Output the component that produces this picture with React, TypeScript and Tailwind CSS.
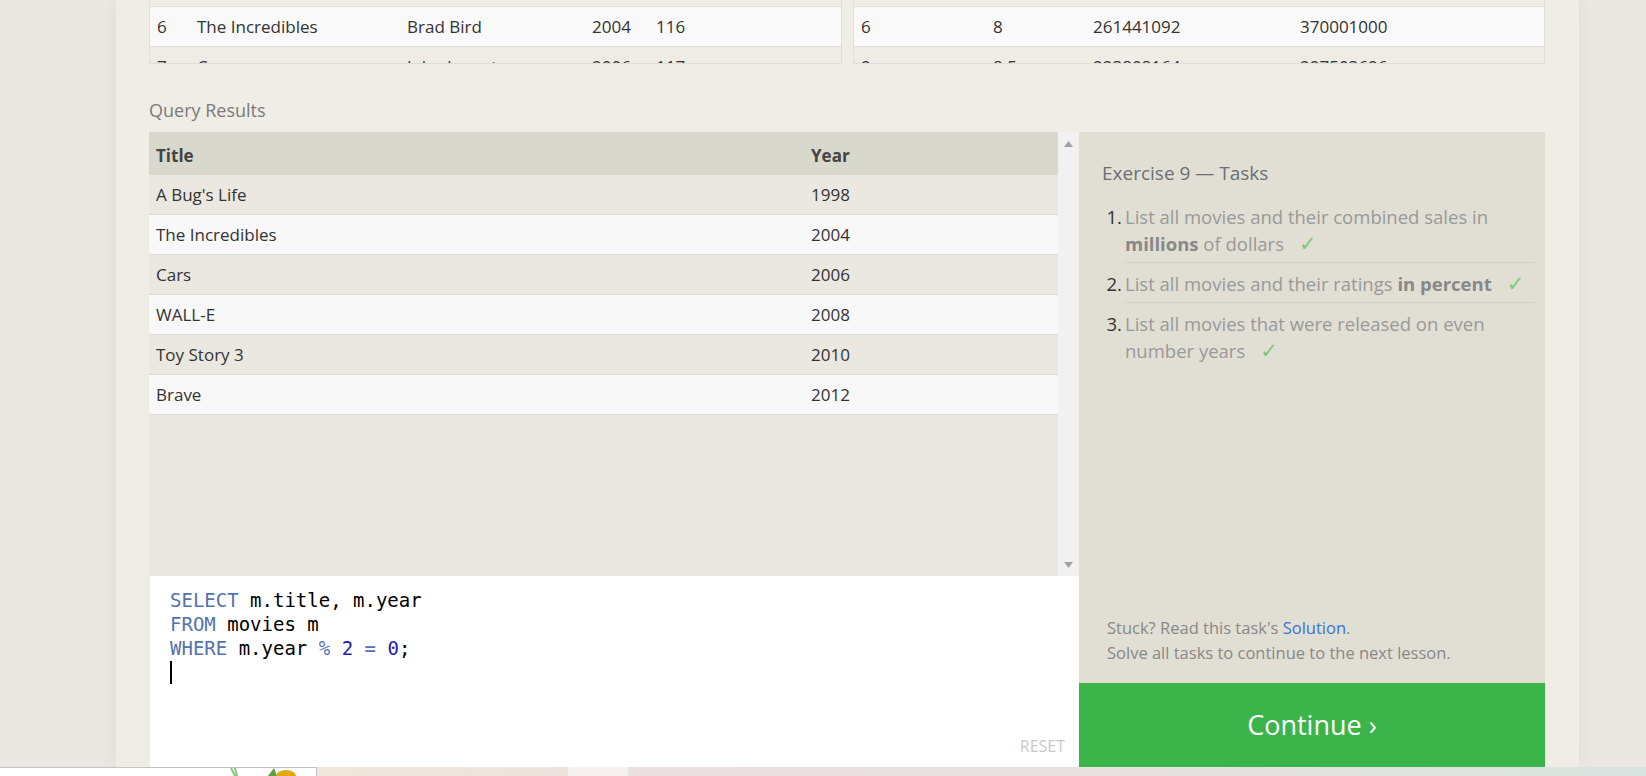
import React from "react";

const LEFT_ROWS = [
  ["5", "Monsters, Inc.", "Pete Docter", "2001", "92"],
  ["6", "The Incredibles", "Brad Bird", "2004", "116"],
  ["7", "Cars", "John Lasseter", "2006", "117"],
];

const RIGHT_ROWS = [
  ["3", "7.9", "245852179", "239163000"],
  ["6", "8", "261441092", "370001000"],
  ["9", "8.5", "223808164", "297503696"],
];

const RESULTS = [
  ["A Bug's Life", "1998"],
  ["The Incredibles", "2004"],
  ["Cars", "2006"],
  ["WALL-E", "2008"],
  ["Toy Story 3", "2010"],
  ["Brave", "2012"],
];

function Check() {
  return <span className="ml-[15px] text-[#7acb7a] font-['DejaVu_Sans',sans-serif] text-[21px] leading-[20px]">✓</span>;
}

function TopTable({ rows, cols }: { rows: string[][]; cols: string }) {
  return (
    <div className="h-[64px] overflow-hidden border-x border-b border-[#e0ded8]">
      <div className="mt-[-33px]">
        {rows.map((r, i) => (
          <div
            key={i}
            className={`grid ${cols} items-center h-[40px] pl-[7px] border-b border-[#e0ded8] ${i === 1 ? "bg-[#f9f9f9]" : "bg-[#efece5]"}`}
          >
            {r.map((c, j) => (
              <span key={j}>{c}</span>
            ))}
          </div>
        ))}
      </div>
    </div>
  );
}

export default function App() {
  return (
    <div className="w-[1646px] h-[776px] overflow-hidden flex flex-col bg-[#ebe7e3] font-['Open_Sans',sans-serif] text-[17px] text-[#333]">
      <div className="flex h-[767px]">
        <div className="ml-[116px] w-[1463px] bg-[#f0ede6] pl-[33px] pr-[34px] flex flex-col shadow-[0_0_18px_rgba(0,0,0,0.06)]">
          {/* tables scrolled above */}
          <div className="flex gap-[11px]">
            <div className="w-[693px]">
              <TopTable rows={LEFT_ROWS} cols="grid-cols-[40px_210px_185px_64px_1fr]" />
            </div>
            <div className="w-[692px]">
              <TopTable rows={RIGHT_ROWS} cols="grid-cols-[132px_100px_207px_1fr]" />
            </div>
          </div>

          <h2 className="mt-[34px] mb-[10px] h-[24px] leading-[24px] text-[18px] text-[#7a7a7a]">Query Results</h2>

          <div className="flex flex-1">
            <div className="w-[930px] flex flex-col">
              <div className="h-[444px] flex">
                <div className="flex-1 bg-[#eae8e0]">
                  <div className="grid grid-cols-[655px_1fr] items-center h-[43px] pl-[7px] pt-[4px] bg-[#d9d8cc] font-bold text-[#444]">
                    <span>Title</span>
                    <span>Year</span>
                  </div>
                  {RESULTS.map(([t, y], i) => (
                    <div
                      key={t}
                      className={`grid grid-cols-[655px_1fr] items-center h-[40px] pl-[7px] border-b border-[#dddcd6] ${i % 2 ? "bg-[#f8f8f8]" : "bg-[#eae8e0]"}`}
                    >
                      <span>{t}</span>
                      <span>{y}</span>
                    </div>
                  ))}
                </div>
                <div className="w-[21px] bg-[#f1f1f1] flex flex-col items-center justify-between pt-[9px] pb-[8px]">
                  <svg width="9" height="6" viewBox="0 0 9 6"><path d="M4.5 0L9 6H0z" fill="#a3a3a3" /></svg>
                  <svg width="9" height="6" viewBox="0 0 9 6"><path d="M0 0h9L4.5 6z" fill="#a3a3a3" /></svg>
                </div>
              </div>

              <div className="flex-1 bg-white ml-px relative pl-[20px] pt-[12px] font-['DejaVu_Sans_Mono',monospace] text-[19px] leading-[24px] text-black">
                <div><span className="text-[#5671b0]">SELECT</span> m.title, m.year</div>
                <div><span className="text-[#5671b0]">FROM</span> movies m</div>
                <div>
                  <span className="text-[#5671b0]">WHERE</span> m.year <span className="text-[#5671b0]">%</span>{" "}
                  <span className="text-[#1c1cb4]">2</span> <span className="text-[#5671b0]">=</span>{" "}
                  <span className="text-[#1c1cb4]">0</span>;
                </div>
                <div className="h-[24px] flex items-center">
                  <span className="w-[2px] h-[23px] bg-black" />
                </div>
                <span className="absolute right-[14px] bottom-[10px] font-['Open_Sans',sans-serif] text-[16px] leading-[22px] text-[#c9c9c9]">RESET</span>
              </div>
            </div>

            <div className="w-[466px] flex flex-col">
              <div className="flex-1 bg-[#e1dfd4] flex flex-col pl-[23px] pr-[10px] pt-[27px] pb-[18px]">
                <h3 className="text-[19px] leading-[28px] text-[#6b6e76] mb-[9px]">Exercise 9 — Tasks</h3>
                <ol className="text-[18.5px] leading-[27px] text-[#999]">
                  <li className="flex">
                    <span className="w-[23px] shrink-0 text-[#333] text-right pr-[3px] pt-[7px]">1.</span>
                    <div className="flex-1 pt-[7px] pb-[5px] border-b border-[#d2d0c5]">
                      List all movies and their combined sales in <b className="text-[#888]">millions</b> of dollars
                      <Check />
                    </div>
                  </li>
                  <li className="flex">
                    <span className="w-[23px] shrink-0 text-[#333] text-right pr-[3px] pt-[7px]">2.</span>
                    <div className="flex-1 pt-[7px] pb-[5px] border-b border-[#d2d0c5]">
                      List all movies and their ratings <b className="text-[#888]">in percent</b>
                      <Check />
                    </div>
                  </li>
                  <li className="flex">
                    <span className="w-[23px] shrink-0 text-[#333] text-right pr-[3px] pt-[7px]">3.</span>
                    <div className="flex-1 pt-[7px] pb-[5px] pr-[40px]">
                      List all movies that were released on even number years
                      <Check />
                    </div>
                  </li>
                </ol>
                <div className="mt-auto pl-[5px] text-[16.5px] leading-[25px] text-[#888]">
                  <div>
                    Stuck? Read this task's <span className="text-[#3a73d6]">Solution</span>.
                  </div>
                  <div>Solve all tasks to continue to the next lesson.</div>
                </div>
              </div>
              <button className="h-[84px] bg-[#3bb54a] text-white text-[27px] flex items-center justify-center">
                Continue ›
              </button>
            </div>
          </div>
        </div>
      </div>

      {/* bottom strip of another window */}
      <div className="h-[9px] flex">
        <div className="w-[317px] bg-white border-t border-r border-[#c3c3c3] relative">
          <svg className="absolute left-[230px] top-0" width="14" height="8" viewBox="0 0 14 8">
            <path d="M1 0l4 8M5 0l2 8" stroke="#8cc37a" strokeWidth="2" />
          </svg>
          <svg className="absolute left-[266px] top-0" width="30" height="8" viewBox="0 0 30 8">
            <path d="M2 8l6-8 3 8z" fill="#5aa046" />
            <ellipse cx="20" cy="8" rx="10" ry="6" fill="#e2a814" />
          </svg>
        </div>
        <div className="w-[251px] bg-gradient-to-r from-[#f1e7dc] to-[#eee2de]" />
        <div className="w-[60px] bg-[#f6f1ef]" />
        <div className="flex-1 bg-gradient-to-r from-[#ede0e0] via-[#e6e1e0] to-[#d9e3df]" />
      </div>
    </div>
  );
}
